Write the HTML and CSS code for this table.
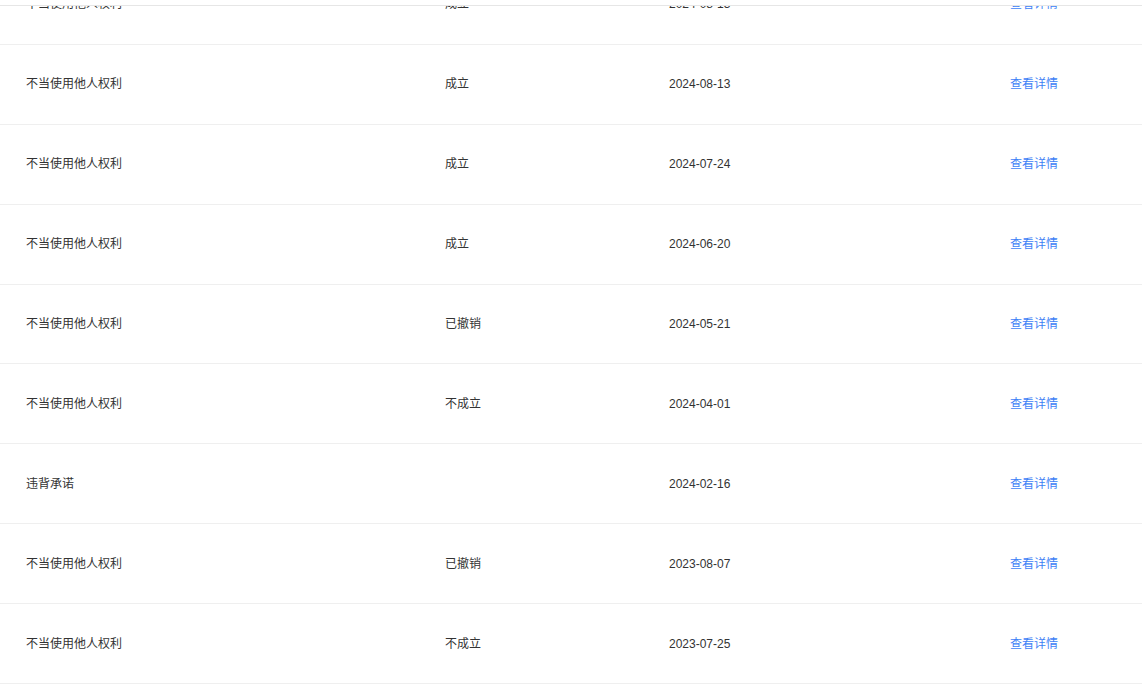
FILE: index.html
```html
<!DOCTYPE html>
<html>
<head>
    <meta charset="UTF-8">
    <title>失信记录</title>
    <link rel="stylesheet" href="styles.css">
</head>
<body>

<div id="page">
    <div class="head"></div>
    <div class="list">
        <div class="list-inner">
            <div class="row">
                <span>不当使用他人权利</span>
                <span>成立</span>
                <span>2024-08-13</span>
                <a href="javascript:;" class="link">查看详情</a>
            </div>
            <div class="row">
                <span>不当使用他人权利</span>
                <span>成立</span>
                <span>2024-08-13</span>
                <a href="javascript:;" class="link">查看详情</a>
            </div>
            <div class="row">
                <span>不当使用他人权利</span>
                <span>成立</span>
                <span>2024-07-24</span>
                <a href="javascript:;" class="link">查看详情</a>
            </div>
            <div class="row">
                <span>不当使用他人权利</span>
                <span>成立</span>
                <span>2024-06-20</span>
                <a href="javascript:;" class="link">查看详情</a>
            </div>
            <div class="row">
                <span>不当使用他人权利</span>
                <span>已撤销</span>
                <span>2024-05-21</span>
                <a href="javascript:;" class="link">查看详情</a>
            </div>
            <div class="row">
                <span>不当使用他人权利</span>
                <span>不成立</span>
                <span>2024-04-01</span>
                <a href="javascript:;" class="link">查看详情</a>
            </div>
            <div class="row">
                <span>违背承诺</span>
                <span></span>
                <span>2024-02-16</span>
                <a href="javascript:;" class="link">查看详情</a>
            </div>
            <div class="row">
                <span>不当使用他人权利</span>
                <span>已撤销</span>
                <span>2023-08-07</span>
                <a href="javascript:;" class="link">查看详情</a>
            </div>
            <div class="row">
                <span>不当使用他人权利</span>
                <span>不成立</span>
                <span>2023-07-25</span>
                <a href="javascript:;" class="link">查看详情</a>
            </div>
        </div>
    </div>
</div>

</body>
</html>
```

FILE: styles.css
```css
* {
    margin: 0;
    padding: 0;
    text-decoration: none;
    box-sizing: border-box;
}

body {
    background: #fff;
    font-family: "Liberation Sans", "Noto Sans CJK SC", sans-serif;
    font-size: 12px;
    color: #333;
}

#page {
    height: 686px;
    overflow: hidden;
    display: flex;
    flex-direction: column;
}

.head {
    height: 6px;
    flex: none;
    border-bottom: 1px solid #e6e6e6;
    background: #fff;
}

.list {
    flex: 1;
    overflow: hidden;
}

/* 第一行被表头盖住一部分 */
.list-inner {
    margin-top: -41px;
}

.row {
    display: grid;
    grid-template-columns: 419px 224px 341px 1fr;
    align-items: center;
    height: 79.9px;
    padding-left: 26px;
    border-bottom: 1px solid #efefef;
    line-height: 16px;
}

.link {
    color: #3e7ff6;
}
```
